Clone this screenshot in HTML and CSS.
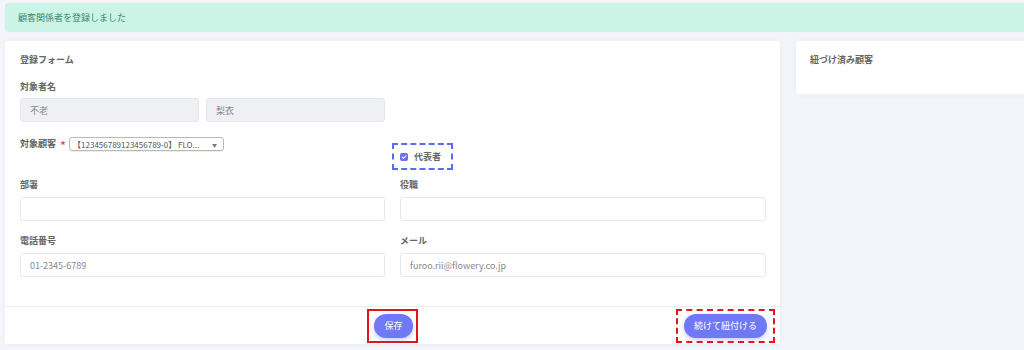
FILE: index.html
```html
<!DOCTYPE html>
<html lang="ja">
<head>
<meta charset="utf-8">
<link rel="stylesheet" href="styles.css">
</head>
<body>
<div class="page">
  <div class="alert">顧客関係者を登録しました</div>
  <div class="main">
    <section class="card form-card">
      <div class="card-body">
        <h2 class="card-title">登録フォーム</h2>
        <div class="field">
          <div class="label">対象者名</div>
          <div class="name-row">
            <div class="input readonly">不老</div>
            <div class="input readonly">梨衣</div>
          </div>
        </div>
        <div class="grid2 row-customer">
          <div class="customer">
            <span class="label">対象顧客</span>
            <span class="req">*</span>
            <span class="select">【123456789123456789-0】 FLO...<span class="caret">▼</span></span>
          </div>
          <div class="rep-wrap">
            <label class="rep">
              <span class="check">
                <svg width="6" height="6" viewBox="0 0 10 10"><path d="M2 5.2 L4.2 7.3 L8.2 3" fill="none" stroke="#fff" stroke-width="1.8" stroke-linecap="round" stroke-linejoin="round"/></svg>
              </span>
              <span class="rep-text">代表者</span>
            </label>
          </div>
        </div>
        <div class="grid2 row-dept">
          <div class="field-col">
            <div class="label">部署</div>
            <div class="input"></div>
          </div>
          <div class="field-col">
            <div class="label">役職</div>
            <div class="input"></div>
          </div>
        </div>
        <div class="grid2 row-tel">
          <div class="field-col">
            <div class="label">電話番号</div>
            <div class="input">01-2345-6789</div>
          </div>
          <div class="field-col">
            <div class="label">メール</div>
            <div class="input">furoo.rii@flowery.co.jp</div>
          </div>
        </div>
      </div>
      <div class="card-footer">
        <div></div>
        <div class="mark-solid"><button class="btn">保存</button></div>
        <div class="right">
          <div class="mark-dashed"><button class="btn">続けて紐付ける</button></div>
        </div>
      </div>
    </section>
    <section class="card side-card">
      <h2 class="card-title">紐づけ済み顧客</h2>
    </section>
  </div>
</div>
</body>
</html>
```
FILE: styles.css
```css
* { box-sizing: border-box; }
html, body { margin: 0; padding: 0; }
body {
  background: #f4f5fa;
  font-family: "Noto Sans CJK JP", "Noto Sans", sans-serif;
  font-size: 9px;
  color: #666;
  overflow: hidden;
  width: 1024px;
  height: 350px;
}
.page {
  padding: 3px 0 0 5px;
  width: 1100px;
}
.alert {
  height: 29px;
  background: #cbf4e7;
  color: #3a8a6c;
  border-radius: 3px;
  padding-left: 13px;
  display: flex;
  align-items: center;
  font-size: 9px;
}
.main {
  display: flex;
  gap: 16px;
  margin-top: 9px;
  align-items: flex-start;
}
.card {
  background: #fff;
  border-radius: 3px;
  box-shadow: 0 0 6px rgba(40, 50, 90, 0.04);
}
.form-card { width: 775px; height: 303px; display: flex; flex-direction: column; }
.card-body { padding: 13px 14px 0 15px; flex: 1; }
.card-title {
  margin: 0;
  font-size: 9px;
  line-height: 12px;
  font-weight: 700;
  color: #666;
}
.label {
  font-size: 9px;
  line-height: 12px;
  font-weight: 700;
  color: #666;
}
.field { margin-top: 15px; }
.field .label { margin-bottom: 5px; }
.name-row { display: flex; gap: 7px; }
.name-row .input { width: 179px; }
.input {
  height: 24px;
  border: 1px solid #e6e8ec;
  border-radius: 3px;
  background: #fff;
  padding-left: 9px;
  display: flex;
  align-items: center;
  color: #888;
  font-size: 9px;
}
.input.readonly { background: #eef0f4; border-color: #e4e7ec; }
.grid2 {
  display: grid;
  grid-template-columns: 365px 366px;
  column-gap: 15px;
}
.row-customer { margin-top: 15px; height: 33px; }
.customer { display: flex; align-items: center; height: 14px; }
.req { color: #f5365c; margin: 3px 3px 0 4px; font-size: 13px; line-height: 10px; }
.select {
  display: inline-flex;
  align-items: center;
  width: 155px;
  height: 14px;
  border: 1px solid #b9b9b9;
  border-radius: 3px;
  box-shadow: 0 1px 1px rgba(0,0,0,0.08);
  font-size: 8px;
  color: #555;
  padding-left: 3px;
  position: relative;
  white-space: nowrap;
  overflow: hidden;
}
.caret { position: absolute; right: 6px; font-size: 5px; color: #777; }
.rep-wrap { margin-left: -8px; padding-top: 6px; }
.rep {
  display: inline-flex;
  align-items: center;
  width: 61px;
  height: 27px;
  border: 2px dashed #5a6cf5;
  padding-left: 6px;
  gap: 6px;
}
.check {
  width: 8px;
  height: 8px;
  border-radius: 2px;
  background: #6c70ec;
  display: flex;
  align-items: center;
  justify-content: center;
}
.rep-text { font-size: 9px; color: #666; font-weight: 700; }
.row-dept { margin-top: 9px; }
.row-tel { margin-top: 14px; }
.field-col .label { margin-bottom: 6px; }
.card-footer {
  border-top: 1px solid #ebedf1;
  height: 38px;
  display: grid;
  grid-template-columns: 1fr auto 1fr;
  align-items: center;
  padding: 0 5px;
}
.right { display: flex; justify-content: flex-end; }
.mark-solid {
  border: 2px solid #e0161c;
  padding: 2px 3px 2px 5px;
  height: 34px;
  display: flex;
  align-items: center;
}
.mark-dashed {
  border: 2px dashed #e0161c;
  padding: 2px 6px 2px 6px;
  height: 34px;
  display: flex;
  align-items: center;
}
.btn {
  border: none;
  background: #6f78f5;
  color: #fff;
  font-family: "Noto Sans CJK JP", "Noto Sans", sans-serif;
  font-size: 9px;
  height: 24px;
  border-radius: 12px;
  padding: 0 10px;
  box-shadow: 0 2px 5px rgba(100, 110, 240, 0.35);
}
.side-card {
  width: 300px;
  height: 53px;
  padding: 13px 14px;
}
```
